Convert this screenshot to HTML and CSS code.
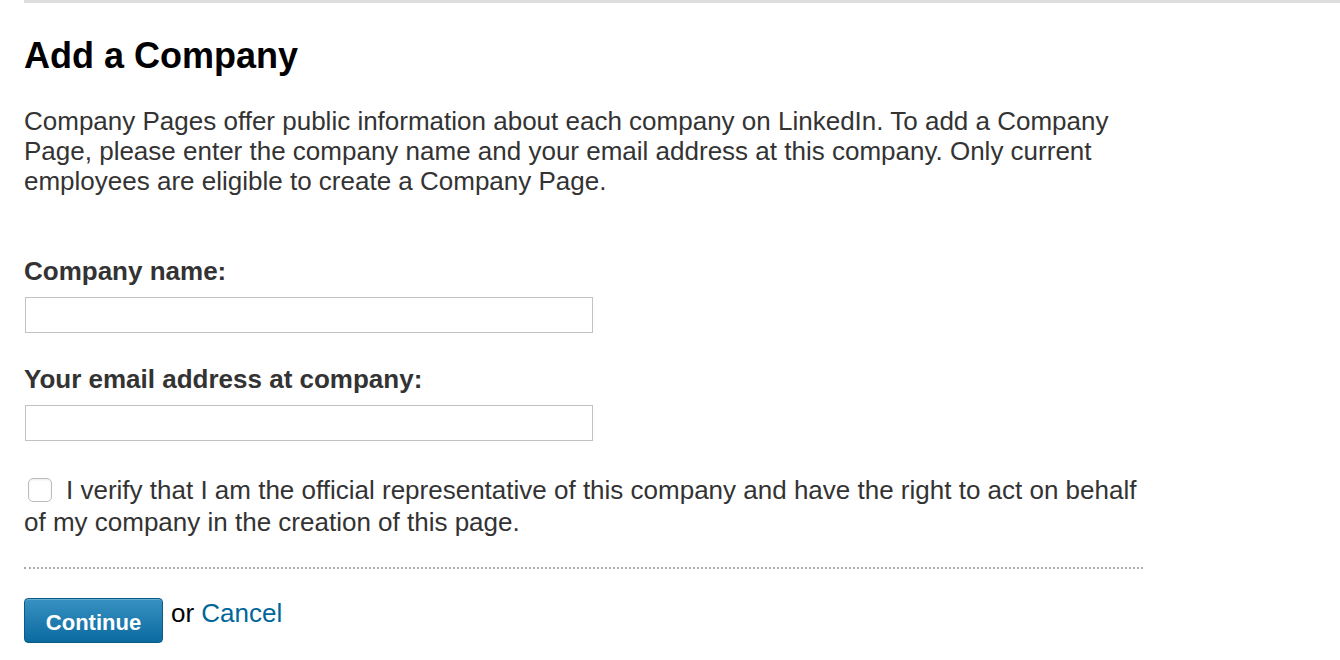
FILE: index.html
```html
<!DOCTYPE html>
<html lang="en">
<head>
    <meta charset="UTF-8">
    <title>Add a Company</title>
    <link rel="stylesheet" href="styles.css">
</head>
<body>
    <div class="page">
        <h1 class="heading">Add a Company</h1>
        <p class="intro">Company Pages offer public information about each company on LinkedIn. To add a Company Page, please enter the company name and your email address at this company. Only current employees are eligible to create a Company Page.</p>

        <form class="company-form">
            <label for="company-name">Company name:</label>
            <input type="text" id="company-name" name="company-name">

            <label for="company-email">Your email address at company:</label>
            <input type="text" id="company-email" name="company-email">

            <div class="verify">
                <input type="checkbox" id="verify"><label for="verify" class="verify-text">I verify that I am the official representative of this company and have the right to act on behalf of my company in the creation of this page.</label>
            </div>

            <div class="actions">
                <input type="submit" value="Continue">
                <span class="or">or <a href="#" class="cancel">Cancel</a></span>
            </div>
        </form>
    </div>
</body>
</html>
```

FILE: styles.css
```css
body {
    margin: 0;
    background: #fff;
    font-family: 'Liberation Sans', Arial, sans-serif;
    color: #333;
}

.page {
    margin-left: 24px;
    border-top: 3px solid #ddd;
    padding-top: 32px;
}

.heading {
    margin: 0;
    font-size: 36px;
    line-height: 42px;
    color: #000;
}

.intro {
    width: 1100px;
    margin: 29px 0 0;
    font-size: 26px;
    line-height: 30px;
}

.company-form {
    width: 1119px;
    margin-top: 60px;
}

.company-form label {
    display: block;
    font-size: 26px;
    line-height: 30px;
    font-weight: bold;
    margin-bottom: 11px;
}

input[type=text] {
    display: block;
    width: 568px;
    height: 36px;
    margin: 0 0 31px 1px;
    padding: 4px 8px;
    border: 1px solid #c2c2c2;
    box-sizing: border-box;
    font-size: 18px;
}

.verify {
    padding: 2px 0 29px;
    border-bottom: 2px dotted #aaa;
    font-size: 26px;
    line-height: 32px;
}

.verify input[type=checkbox] {
    -webkit-appearance: none;
    appearance: none;
    width: 24px;
    height: 24px;
    margin: 0 14px 0 4px;
    border: 1px solid #bbb;
    border-radius: 5px;
    background: #fff;
    vertical-align: -3px;
    box-shadow: inset 0 1px 2px rgba(0, 0, 0, 0.08);
}

.company-form .verify-text {
    display: inline;
    font-weight: normal;
    margin: 0;
}

.actions {
    display: flex;
    align-items: flex-start;
    margin-top: 29px;
}

input[type=submit] {
    width: 139px;
    height: 45px;
    border: 1px solid #0c5a87;
    border-radius: 4px;
    background: linear-gradient(#3891c2, #0b6aa0);
    box-shadow: inset 0 1px 0 rgba(255, 255, 255, 0.25);
    color: #fff;
    font-family: 'Liberation Sans', Arial, sans-serif;
    font-size: 22px;
    font-weight: bold;
    padding: 4px 0 0;
    cursor: pointer;
}

.or {
    margin-left: 8px;
    font-size: 26px;
    line-height: 30px;
    color: #000;
}

.cancel {
    color: #006699;
    text-decoration: none;
}
```
